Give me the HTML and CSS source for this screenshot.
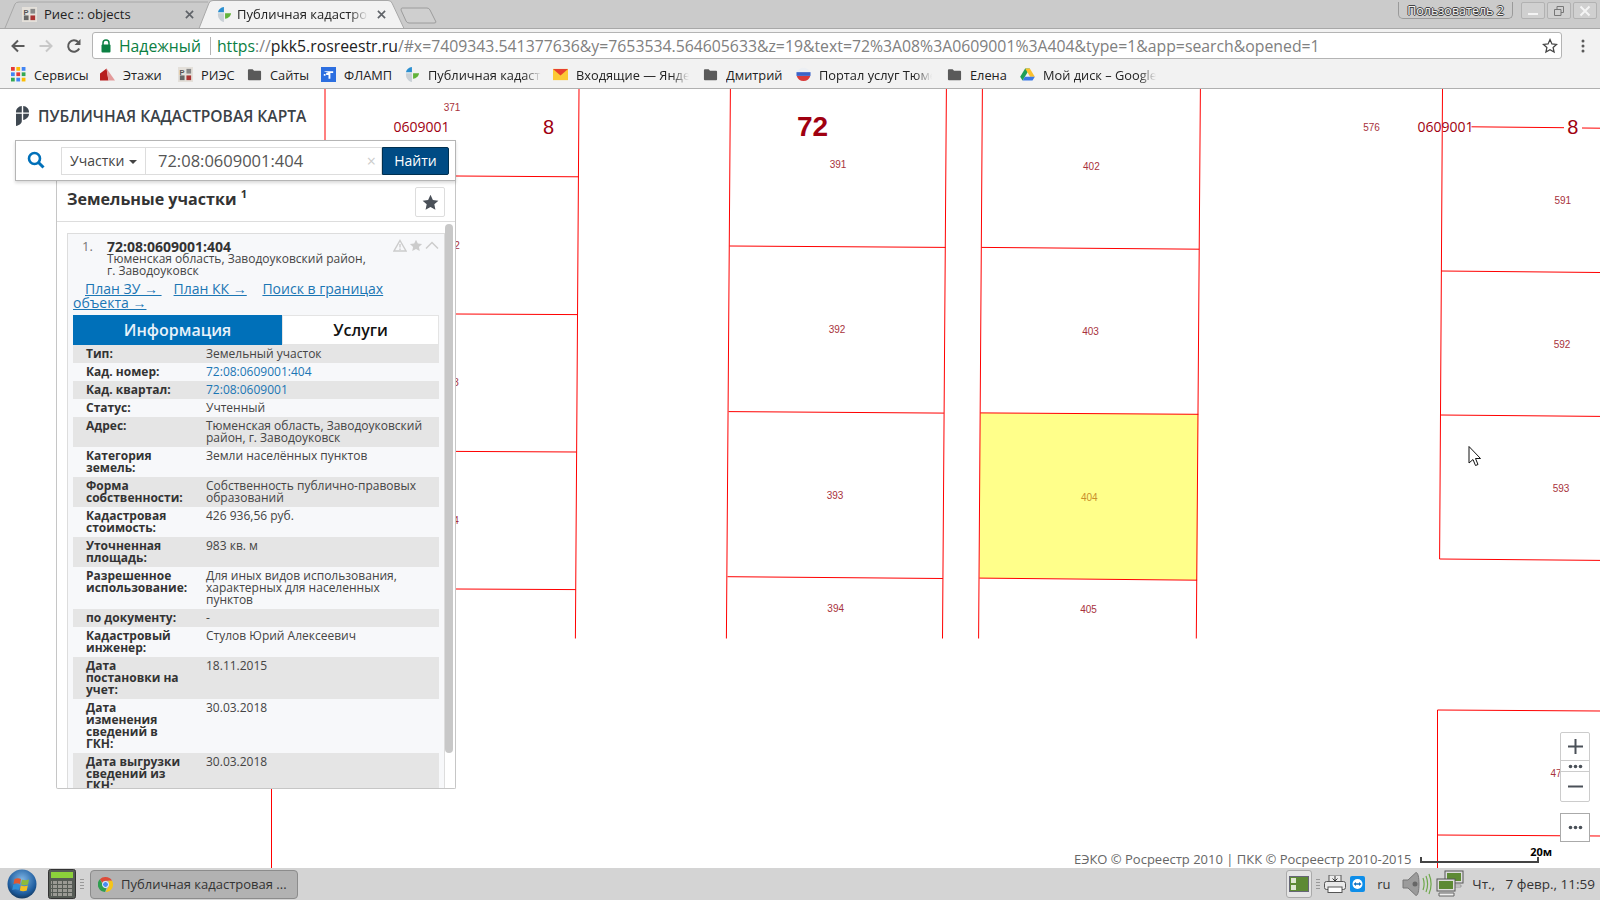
FILE: index.html
```html
<!DOCTYPE html>
<html lang="ru">
<head>
<meta charset="utf-8">
<title>Публичная кадастровая карта</title>
<link rel="stylesheet" href="styles.css">
</head>
<body>
<svg class="defs" width="0" height="0" aria-hidden="true">
  <defs>
    <symbol id="i-pkk" viewBox="0 0 14 16">
      <path d="M6.400 0C3 .3.5 2.600 0 5.600h6.400z" fill="#2b8fd0"/>
      <path d="M7.600 6.600H14c-.3 3-3 5.500-6.400 5.900z" fill="#62b33a"/>
      <path d="M0 6.600h6.400V16C3 15.500 0 12 0 8.500z" fill="#c9d0d6"/>
    </symbol>
    <symbol id="i-ries" viewBox="0 0 16 16">
      <rect width="16" height="16" fill="#e4e0da"/>
      <text x="1.500" y="8" class="ries-p">P</text>
      <rect x="9" y="2" width="5" height="5" fill="#888"/>
      <rect x="2" y="9" width="5" height="5" fill="#666"/>
      <rect x="9" y="9" width="5" height="5" fill="#a33"/>
    </symbol>
    <symbol id="i-folder" viewBox="0 0 16 16">
      <path d="M1 3.500A1 1 0 0 1 2 2.500h4l1.500 1.500H14a1 1 0 0 1 1 1V13a1 1 0 0 1-1 1H2a1 1 0 0 1-1-1z" fill="#5a5a5a"/>
    </symbol>
    <symbol id="i-x" viewBox="0 0 10 10">
      <path d="M1 1l8 8M9 1L1 9" stroke="#5f6368" stroke-width="1.800" fill="none"/>
    </symbol>
    <symbol id="i-star" viewBox="0 0 20 20">
      <path d="M10 1l2.800 6 6.500.8-4.800 4.400 1.300 6.400L10 15.400 4.200 18.600l1.300-6.400L.7 7.800 7.200 7z"/>
    </symbol>
  </defs>
</svg>

<header class="tabstrip">
  <svg class="tab-shapes" width="1600" height="29" viewBox="0 0 1600 29" aria-hidden="true">
    <path d="M5 28L15 4Q16 2 19 2H197L208 2" fill="none" stroke="#a8a8a8"/>
    <path d="M199 28.500L209 3Q210 .5 213 .5H388Q391 .5 392 3L404 28.500z" fill="#f2f2f2" stroke="#a8a8a8"/>
    <path d="M402 8H427Q429 8 430 10L436 22Q436 23 434 23H409Q407 23 406 21L401 10Q401 8 402 8z" fill="#cfcfcf" stroke="#9c9c9c"/>
  </svg>
  <div class="tab">
    <svg class="fav"><use href="#i-ries"/></svg>
    <span class="tab-title">Риес :: objects</span>
    <svg class="tab-x"><use href="#i-x"/></svg>
  </div>
  <div class="tab tab-active">
    <svg class="fav"><use href="#i-pkk"/></svg>
    <span class="tab-title tab-fade">Публичная кадастровая карта</span>
    <svg class="tab-x"><use href="#i-x"/></svg>
  </div>
  <div class="win">
    <span class="profile">Пользователь 2</span>
    <span class="winbtn"><svg width="12" height="12" viewBox="0 0 12 12"><path d="M1 9h10" stroke="#f4f4f4" stroke-width="2"/></svg></span>
    <span class="winbtn"><svg width="12" height="12" viewBox="0 0 12 12"><path d="M1.500 4.500h6.500v6h-6.500zM4 4.500v-3h6.500v6H8" fill="none" stroke="#777"/></svg></span>
    <span class="winbtn"><svg width="12" height="12" viewBox="0 0 12 12"><path d="M1.500 1.500l9 9M10.500 1.500l-9 9" stroke="#f4f4f4" stroke-width="2"/></svg></span>
  </div>
</header>

<nav class="toolbar">
  <svg class="tool" viewBox="0 0 16 16"><path d="M14.500 8H2.500M8 2.500L2.500 8 8 13.500" fill="none" stroke="#5a5a5a" stroke-width="2"/></svg>
  <svg class="tool" viewBox="0 0 16 16"><path d="M1.500 8h12M8 2.500L13.500 8 8 13.500" fill="none" stroke="#c8c8c8" stroke-width="2"/></svg>
  <svg class="tool" viewBox="0 0 16 16"><path d="M13.200 10.500A5.800 5.800 0 1 1 12.200 4" fill="none" stroke="#5a5a5a" stroke-width="2"/><path d="M14.500 1v6h-6z" fill="#5a5a5a"/></svg>
  <div class="omnibox">
    <svg class="lock" viewBox="0 0 12 14"><path d="M3 6V4a3 3 0 0 1 6 0v2" fill="none" stroke="#0b8043" stroke-width="1.500"/><rect x="1.500" y="5.500" width="9" height="8" rx="1" fill="#0b8043"/></svg>
    <span class="secure">Надежный</span>
    <span class="omni-sep"></span>
    <span class="url"><span class="url-s">https</span>://<span class="url-h">pkk5.rosreestr.ru</span>/#x=7409343.541377636&amp;y=7653534.564605633&amp;z=19&amp;text=72%3A08%3A0609001%3A404&amp;type=1&amp;app=search&amp;opened=1</span>
    <svg class="omni-star" viewBox="0 0 20 20"><path d="M10 2l2.400 5.400 5.800.6-4.300 3.900 1.200 5.700L10 14.700l-5.100 2.900 1.200-5.700L1.800 8l5.800-.6z" fill="none" stroke="#444" stroke-width="1.600"/></svg>
  </div>
  <svg class="dots" viewBox="0 0 4 16"><circle cx="2" cy="3" r="1.500"/><circle cx="2" cy="8" r="1.500"/><circle cx="2" cy="13" r="1.500"/></svg>
</nav>

<nav class="bookmarks">
  <a class="bm"><svg class="fav" viewBox="0 0 14 14"><g><rect x="0" y="0" width="3.500" height="3.500" fill="#e53935"/><rect x="5" y="0" width="3.500" height="3.500" fill="#fbbc05"/><rect x="10" y="0" width="3.500" height="3.500" fill="#4285f4"/><rect x="0" y="5" width="3.500" height="3.500" fill="#4285f4"/><rect x="5" y="5" width="3.500" height="3.500" fill="#e53935"/><rect x="10" y="5" width="3.500" height="3.500" fill="#34a853"/><rect x="0" y="10" width="3.500" height="3.500" fill="#34a853"/><rect x="5" y="10" width="3.500" height="3.500" fill="#4285f4"/><rect x="10" y="10" width="3.500" height="3.500" fill="#fbbc05"/></g></svg><span>Сервисы</span></a>
  <a class="bm"><svg class="fav" viewBox="0 0 16 16"><path d="M0 14.500V7L7 1.500 9 14.500z" fill="#b71c1c"/><path d="M7 1.500L16 14.500H9z" fill="#e39a9a"/></svg><span>Этажи</span></a>
  <a class="bm"><svg class="fav"><use href="#i-ries"/></svg><span>РИЭС</span></a>
  <a class="bm"><svg class="fav"><use href="#i-folder"/></svg><span>Сайты</span></a>
  <a class="bm"><svg class="fav" viewBox="0 0 16 16"><rect width="16" height="16" fill="#2d6fe0"/><path d="M3 4.500h10v2H10v6H8V8.500H5.500v-2H8zM3 7.500h1.800v1.800H3z" fill="#fff"/></svg><span>ФЛАМП</span></a>
  <a class="bm"><svg class="fav"><use href="#i-pkk"/></svg><span class="bm-fade">Публичная кадастровая карта</span></a>
  <a class="bm"><svg class="fav" viewBox="0 0 16 16"><rect y="2" width="16" height="12" fill="#fcc935"/><path d="M0 2h16L8 9z" fill="#e8402f"/></svg><span class="bm-fade">Входящие — Яндекс.Почта</span></a>
  <a class="bm"><svg class="fav"><use href="#i-folder"/></svg><span>Дмитрий</span></a>
  <a class="bm"><svg class="fav" viewBox="0 0 16 16"><path d="M1 5.500A7.500 7.500 0 0 1 15 5.500z" fill="#eceff3"/><path d="M.5 5.500h15v4H.5z" fill="#3a63c8"/><path d="M.8 9.500h14.400A7.500 7.500 0 0 1 .8 9.500z" fill="#d83a3a"/></svg><span class="bm-fade">Портал услуг Тюменской</span></a>
  <a class="bm"><svg class="fav"><use href="#i-folder"/></svg><span>Елена</span></a>
  <a class="bm"><svg class="fav" viewBox="0 0 16 16"><path d="M5.500 1.500h5L5.200 10.500l-2.500 4L.2 10.500z" fill="#1e9e57"/><path d="M5.500 1.500h5l5.300 9h-5z" fill="#fbc02d"/><path d="M5.200 10.500h10.600l-2.500 4H2.700z" fill="#3b78e7"/></svg><span class="bm-fade">Мой диск – Google Диск</span></a>
</nav>

<main class="map">
  <svg class="tiles" width="1600" height="779" viewBox="0 89 1600 779">
    <polygon class="sel" points="980.300,412.900 1198.300,414.300 1197.100,580 979.400,577.900"/>
    <g class="lines">
      <line x1="325" y1="89" x2="325" y2="142"/>
      <line x1="456" y1="176" x2="578.600" y2="176.800"/>
      <line x1="456" y1="314" x2="577.400" y2="314.600"/>
      <line x1="456" y1="451.400" x2="576.400" y2="452"/>
      <line x1="456" y1="589" x2="575.800" y2="589.600"/>
      <line x1="579" y1="89" x2="575.400" y2="638.500"/>
      <line x1="730.400" y1="89" x2="726.400" y2="638.500"/>
      <line x1="946.400" y1="89" x2="942.500" y2="638.500"/>
      <line x1="729.600" y1="246" x2="945.400" y2="247.400"/>
      <line x1="728.600" y1="411.600" x2="943.900" y2="413.100"/>
      <line x1="727.500" y1="576.700" x2="942.900" y2="578.500"/>
      <line x1="982.400" y1="89" x2="978.600" y2="638.500"/>
      <line x1="1200.400" y1="89" x2="1196.300" y2="638.500"/>
      <line x1="981.500" y1="247.400" x2="1199.200" y2="249.200"/>
      <line x1="980.300" y1="412.900" x2="1198.300" y2="414.300"/>
      <line x1="979.400" y1="578.100" x2="1197.100" y2="580.200"/>
      <line x1="1442.500" y1="89" x2="1439.600" y2="559"/>
      <line x1="1441.300" y1="271" x2="1600" y2="272.500"/>
      <line x1="1440.500" y1="415" x2="1600" y2="416.400"/>
      <line x1="1439.600" y1="559" x2="1600" y2="560.400"/>
      <line x1="1471.500" y1="126.800" x2="1564" y2="127.700"/>
      <line x1="1582" y1="128" x2="1600" y2="128.200"/>
      <line x1="271.500" y1="788" x2="271.500" y2="868"/>
      <line x1="1437.500" y1="710" x2="1437.500" y2="868"/>
      <line x1="1437.500" y1="710" x2="1600" y2="711"/>
      <line x1="1437.500" y1="835" x2="1600" y2="836"/>
    </g>
    <g class="lbl">
      <text x="452" y="111">371</text><text x="457" y="249">2</text><text x="456" y="386">3</text><text x="456" y="524">4</text>
      <text x="838" y="168">391</text><text x="837" y="333">392</text><text x="835" y="499">393</text><text x="835.700" y="612">394</text>
      <text x="1091.400" y="170">402</text><text x="1090.500" y="335">403</text><text class="lbl-sel" x="1089.300" y="501">404</text><text x="1088.500" y="613">405</text>
      <text x="1371.600" y="131">576</text><text x="1562.800" y="204">591</text><text x="1562" y="348">592</text><text x="1561" y="492">593</text>
      <text x="1556" y="777">47</text>
    </g>
    <g class="lbl-q"><text x="421.500" y="132">0609001</text><text x="1445.600" y="132">0609001</text></g>
    <g class="lbl-8"><text x="548.600" y="134">8</text><text x="1572.700" y="134">8</text></g>
    <text class="lbl-72" x="812.500" y="135.500">72</text>
    <path class="cursor" d="M1469 446.500v16.500l4-3.500 2.500 6 2.500-1-2.500-6h5z"/>
  </svg>

  <section class="side">
    <div class="brand">
      <svg class="brand-logo" viewBox="0 0 13 20"><path d="M5.800 0C2.500.300 0 2.800 0 6v.5h5.800zM7.200 0v6.500H13V6c0-3.200-2.400-5.700-5.800-6zM0 7.800V20c3.200-.5 5.800-2.500 5.800-5V7.800zM7.200 7.800V14C10.500 13.500 13 11 13 7.800z"/></svg>
      <span>ПУБЛИЧНАЯ КАДАСТРОВАЯ КАРТА</span>
    </div>
    <div class="search">
      <svg class="search-ico" viewBox="0 0 18 18"><circle cx="7.500" cy="7.500" r="5.500" fill="none" stroke="#0070b9" stroke-width="2.600"/><path d="M11.500 11.500l5 5" stroke="#0070b9" stroke-width="3"/></svg>
      <div class="sel-box">Участки<i class="caret"></i></div>
      <div class="input"><span>72:08:0609001:404</span><span class="clear">×</span></div>
      <button class="find">Найти</button>
    </div>
    <div class="results">
      <div class="res-head">
        <h2>Земельные участки <sup>1</sup></h2>
        <span class="fav-btn"><svg viewBox="0 0 20 20"><use href="#i-star"/></svg></span>
      </div>
      <div class="res-body">
        <span class="scroll"></span>
        <article class="card">
          <div class="card-head">
            <span class="num">1.</span>
            <div class="card-title">
              <b>72:08:0609001:404</b>
              <p>Тюменская область, Заводоуковский район,<br>г. Заводоуковск</p>
            </div>
            <div class="card-icons">
              <svg viewBox="0 0 14 13"><path d="M7 1.500L13 12H1z" fill="none" stroke="#ccc" stroke-width="1.400"/><path d="M7 5v3.500M7 9.500v1.400" stroke="#ccc" stroke-width="1.400"/></svg>
              <svg viewBox="0 0 20 20" class="star-g"><use href="#i-star"/></svg>
              <svg viewBox="0 0 14 13"><path d="M1 9.500L7 3.500l6 6" fill="none" stroke="#ccc" stroke-width="1.500"/></svg>
            </div>
          </div>
          <p class="links"><a>План ЗУ →&nbsp;</a><a>План КК →</a> <a>Поиск в границах объекта →</a></p>
          <div class="tabs"><span class="t-on">Информация</span><span class="t-off">Услуги</span></div>
          <dl class="props">
            <div><dt>Тип:</dt><dd>Земельный участок</dd></div>
            <div><dt>Кад. номер:</dt><dd><a>72:08:0609001:404</a></dd></div>
            <div><dt>Кад. квартал:</dt><dd><a>72:08:0609001</a></dd></div>
            <div><dt>Статус:</dt><dd>Учтенный</dd></div>
            <div><dt>Адрес:</dt><dd>Тюменская область, Заводоуковский район, г. Заводоуковск</dd></div>
            <div><dt>Категория земель:</dt><dd>Земли населённых пунктов</dd></div>
            <div><dt>Форма собственности:</dt><dd>Собственность публично-правовых образований</dd></div>
            <div><dt>Кадастровая стоимость:</dt><dd>426 936,56 руб.</dd></div>
            <div><dt>Уточненная площадь:</dt><dd>983 кв. м</dd></div>
            <div><dt>Разрешенное использование:</dt><dd>Для иных видов использования, характерных для населенных пунктов</dd></div>
            <div><dt>по документу:</dt><dd>-</dd></div>
            <div><dt>Кадастровый инженер:</dt><dd>Стулов Юрий Алексеевич</dd></div>
            <div><dt>Дата постановки на учет:</dt><dd>18.11.2015</dd></div>
            <div><dt>Дата изменения сведений в ГКН:</dt><dd>30.03.2018</dd></div>
            <div><dt>Дата выгрузки сведений из ГКН:</dt><dd>30.03.2018</dd></div>
          </dl>
        </article>
      </div>
    </div>
  </section>

  <div class="zoom-box">
    <span class="z z-plus"><svg width="15" height="15" viewBox="0 0 15 15"><path d="M7.500 0v15M0 7.500h15" stroke="#4a5058" stroke-width="2"/></svg></span>
    <span class="z z-dots"><svg width="15" height="5" viewBox="0 0 15 5"><circle cx="2.500" cy="2.500" r="1.800"/><circle cx="7.500" cy="2.500" r="1.800"/><circle cx="12.500" cy="2.500" r="1.800"/></svg></span>
    <span class="z z-minus"><svg width="15" height="3" viewBox="0 0 15 3"><path d="M0 1.500h15" stroke="#4a5058" stroke-width="2"/></svg></span>
  </div>
  <div class="more-box"><svg width="15" height="5" viewBox="0 0 15 5"><circle cx="2.500" cy="2.500" r="1.800"/><circle cx="7.500" cy="2.500" r="1.800"/><circle cx="12.500" cy="2.500" r="1.800"/></svg></div>
  <div class="copy">ЕЭКО © Росреестр 2010 | ПКК © Росреестр 2010-2015</div>
  <div class="scale"><b>20м</b></div>
</main>

<footer class="taskbar">
  <svg class="orb" viewBox="0 0 30 30">
    <defs><radialGradient id="g-orb" cx=".5" cy=".35" r=".7"><stop offset="0" stop-color="#7fb6e6"/><stop offset=".7" stop-color="#1d5c9e"/><stop offset="1" stop-color="#12304f"/></radialGradient></defs>
    <circle cx="15" cy="15" r="14.500" fill="url(#g-orb)"/>
    <path d="M7.500 10c2.500-1 4.500-1 6.500 0l-1 5c-2-1-4-1-6.500 0z" fill="#e2572f"/>
    <path d="M15 10.500c2 1 4.500 1 7 0l-1 5c-2.500 1-5 1-7 0z" fill="#8dbb3c"/>
    <path d="M6.200 16c2.500-1 4.500-1 6.500 0l-1 5c-2-1-4-1-6.500 0z" fill="#2f8fd8"/>
    <path d="M13.800 16.500c2 1 4.500 1 7 0l-1 5c-2.500 1-5 1-7 0z" fill="#f5c022"/>
  </svg>
  <svg class="calc" viewBox="0 0 28 30">
    <defs><pattern id="p-keys" width="5" height="4" patternUnits="userSpaceOnUse"><rect width="4" height="3" fill="#9a9a94"/></pattern></defs>
    <rect x=".5" y=".5" width="27" height="29" rx="2" fill="#555b55" stroke="#333"/>
    <rect x="3" y="3" width="22" height="6" fill="#8cd13a"/>
    <rect x="3" y="11" width="22" height="16" fill="url(#p-keys)"/>
  </svg>
  <span class="grip grip-start"></span>
  <div class="task-btn">
    <svg class="chrome" viewBox="0 0 16 16">
      <path d="M8 0a8 8 0 0 1 7 4H8a4 4 0 0 0-3.500 2L2 2.500A8 8 0 0 1 8 0z" fill="#dd4b39"/>
      <path d="M15 4a8 8 0 0 1-6.800 12l3.200-5.800A4 4 0 0 0 11.500 6L11 4z" fill="#f5c518"/>
      <path d="M2 2.500L5 7.800a4 4 0 0 0 4 4.100L7.500 16A8 8 0 0 1 2 2.500z" fill="#2f9e4f"/>
      <circle cx="8" cy="8" r="3.200" fill="#4a8cf0" stroke="#fff"/>
    </svg>
    <span>Публичная кадастровая ...</span>
  </div>
  <div class="tray">
    <span class="tray-on"><svg width="20" height="16" viewBox="0 0 20 16"><rect x=".5" y=".5" width="19" height="15" fill="#5d8a34" stroke="#667"/><rect x="2" y="2" width="5" height="5" fill="#dfe8d0"/><rect x="2" y="9" width="5" height="5" fill="#dfe8d0"/></svg></span>
    <span class="grip"></span>
    <svg class="printer" viewBox="0 0 22 18"><rect x="5" y="0" width="12" height="7" fill="#eee" stroke="#555"/><path d="M11 1v4M8.500 3.500L11 6l2.500-2.500" stroke="#333" fill="none"/><rect x=".5" y="6.500" width="21" height="8" rx="2" fill="#e9e9e9" stroke="#555"/><rect x="4" y="12" width="14" height="5.500" fill="#fff" stroke="#555"/></svg>
    <svg class="tv" viewBox="0 0 15 16"><rect width="15" height="16" rx="2" fill="#0e8ee9"/><circle cx="7.500" cy="8" r="5" fill="#fff"/><path d="M3.500 8l2.500-2v1.300h3V6l2.500 2L9 10V8.700H6V10z" fill="#0e6fc0"/></svg>
    <span class="lang">ru</span>
    <svg class="speaker" viewBox="0 0 32 24"><path d="M2 8h5l8-7.500c2 0 3 5 3 11.500s-1 11.500-3 11.500L7 16H2z" fill="#9b9b9b" stroke="#777"/><circle cx="14" cy="12" r="2.500" fill="#666"/><path d="M22 6c1.500 4 1.500 8 0 12M25 4c2 5 2 11 0 16M28 2c2.500 6 2.500 14 0 20" fill="none" stroke="#6fa84b" stroke-width="1.200"/></svg>
    <svg class="net" viewBox="0 0 28 28"><rect x="9" y="1" width="18" height="12" fill="#ddd" stroke="#555"/><rect x="11" y="3" width="14" height="8" fill="#5d8a34"/><path d="M13 15h12v2H13z" fill="#ddd" stroke="#666" stroke-width=".5"/><rect x="1" y="9" width="18" height="12" fill="#ddd" stroke="#555"/><rect x="3" y="11" width="14" height="8" fill="#5d8a34"/><path d="M3 23h15v3H3z" fill="#eee" stroke="#666"/></svg>
    <span class="clock">Чт.,   7 февр., 11:59</span>
  </div>
</footer>
</body>
</html>
```
FILE: styles.css
```css
* { box-sizing: border-box; }
html, body { margin: 0; padding: 0; }
body {
  width: 1600px;
  height: 900px;
  overflow: hidden;
  display: flex;
  flex-direction: column;
  background: #fff;
  font-family: "Open Sans", "Noto Sans", sans-serif;
  color: #333;
}
.defs { position: absolute; }

/* browser chrome */
.tabstrip {
  position: relative;
  flex: 0 0 29px;
  display: flex;
  padding-left: 22px;
  background: #cbcbcb;
  border-bottom: 1px solid #a8a8a8;
}
.tab-shapes { position: absolute; left: 0; top: 0; }
.tab {
  position: relative;
  width: 195px;
  height: 28px;
  display: flex;
  align-items: center;
  font-size: 13px;
  color: #222;
}
.tab-active { width: 172px; }
.fav { width: 15px; height: 15px; flex: none; }
.tab-title { margin-left: 7px; flex: 1; white-space: nowrap; overflow: hidden; }
.tab-active .tab-title { margin-left: 5px; }
.tab-fade { mask-image: linear-gradient(90deg, #000 86%, transparent 100%); }
.tab-x { width: 9px; height: 9px; flex: none; margin-right: 23px; }
.tab-active .tab-x { margin-right: 3px; margin-left: 9px; }
.win {
  position: absolute;
  right: 3px;
  top: 2px;
  display: flex;
  gap: 2px;
  align-items: flex-start;
}
.profile {
  width: 115px;
  height: 17px;
  margin-right: 6px;
  text-align: center;
  font-size: 12.500px;
  line-height: 18px;
  color: #f2f2f2;
  border: 1px solid #9a9a9a;
  border-top: 0;
  border-radius: 0 0 5px 5px;
  text-shadow: 1px 0 #444, -1px 0 #444, 0 1px #444, 0 -1px #444;
}
.winbtn {
  width: 24px;
  height: 17px;
  display: flex;
  align-items: center;
  justify-content: center;
  background: #d0d0d0;
  border: 1px solid #b2b2b2;
  border-radius: 2px;
}

.toolbar {
  flex: 0 0 31px;
  position: relative;
  display: flex;
  align-items: center;
  padding: 2px 0 0 10px;
  background: #f2f2f2;
}
.tool { width: 16px; height: 16px; flex: none; margin-right: 12px; }
.omnibox {
  margin-left: -2px;
  width: 1470px;
  height: 27px;
  display: flex;
  align-items: center;
  padding-left: 7px;
  background: #fff;
  border: 1px solid #b4b4b4;
  border-radius: 3px;
  font-size: 15.750px;
  white-space: nowrap;
  color: #808080;
}
.lock { width: 12px; height: 14px; flex: none; }
.secure { margin-left: 7px; color: #0b8043; }
.omni-sep { width: 1px; height: 18px; margin: 0 6px 0 9px; background: #b4b4b4; }
.url { flex: 1; font-size: 15.800px; }
.url-s { color: #0b8043; }
.url-h { color: #222; }
.omni-star { width: 16px; height: 16px; flex: none; margin-right: 3px; }
.dots { width: 4px; height: 16px; flex: none; margin-left: 19px; fill: #5a5a5a; }

.bookmarks {
  flex: 0 0 29px;
  display: grid;
  grid-template-columns: 89px 78px 69px 74px 84px 148px 150px 93px 151px 73px 140px;
  align-items: center;
  padding: 1px 0 0 11px;
  background: #f2f2f2;
  border-bottom: 1px solid #b0b0b0;
  font-size: 12.800px;
  color: #222;
}
.bm { display: flex; align-items: center; gap: 8px; min-width: 0; }
.bm span { white-space: nowrap; overflow: hidden; }
.bm-fade { width: 113px; mask-image: linear-gradient(90deg, #000 85%, transparent 100%); }

/* map canvas */
.map {
  position: relative;
  flex: 1 1 auto;
  min-height: 0;
  overflow: hidden;
  background: #fff;
}
.tiles { position: absolute; left: 0; top: 0; }
.sel { fill: #ffff8a; }
.lines line { stroke: #f00; stroke-width: 1; }
.lbl text { font: 10px "Liberation Sans", sans-serif; fill: #a8323c; text-anchor: middle; }
.lbl .lbl-sel { fill: #c9902a; }
.lbl-q text { font: 14px "Open Sans", sans-serif; fill: #a00010; text-anchor: middle; }
.lbl-8 text { font: 20px "Liberation Sans", sans-serif; fill: #a00010; text-anchor: middle; }
.lbl-72 { font: bold 28px "Liberation Sans", sans-serif; fill: #a00010; text-anchor: middle; }
.cursor { fill: #fff; stroke: #111; stroke-width: 1; }
.ries-p { font: bold 8px "Liberation Sans", sans-serif; fill: #555; }

/* side panel */
.side { position: absolute; left: 15px; top: 16px; width: 441px; }
.brand {
  height: 35px;
  display: flex;
  align-items: flex-start;
  padding-left: 1px;
  gap: 9px;
  font-size: 15.600px;
  font-weight: 600;
  line-height: 22px;
  color: #3b4248;
  white-space: nowrap;
}
.brand-logo { width: 13px; height: 20px; flex: none; fill: #3f4851; margin-top: 1px; }
.search {
  height: 41px;
  display: flex;
  align-items: center;
  padding-left: 45px;
  padding-right: 6px;
  position: relative;
  background: #fff;
  border: 1px solid #b5b5b5;
  box-shadow: 0 2px 3px rgba(0, 0, 0, .15);
  font-size: 14px;
}
.search-ico { position: absolute; left: 11px; top: 10px; width: 18px; height: 18px; }
.sel-box {
  width: 84px;
  height: 28px;
  display: flex;
  align-items: center;
  padding-left: 8px;
  border: 1px solid #ddd;
  border-right: 0;
  color: #444;
}
.caret {
  margin: 2px 0 0 5px;
  border-top: 4px solid #444;
  border-left: 4px solid transparent;
  border-right: 4px solid transparent;
}
.input {
  flex: 1;
  height: 28px;
  display: flex;
  align-items: center;
  justify-content: space-between;
  padding: 0 5px 0 12px;
  border: 1px solid #ddd;
  font-size: 16.500px;
  color: #555;
}
.clear { color: #ccc; font-size: 16px; }
.find {
  width: 67px;
  height: 28px;
  margin: 0;
  padding: 0;
  background: #004b84;
  border: 1px solid #003050;
  border-radius: 0 2px 2px 0;
  font: 14px "Open Sans", sans-serif;
  color: #fff;
}
.results {
  margin-left: 41px;
  width: 400px;
  height: 608px;
  display: flex;
  flex-direction: column;
  background: #fff;
  border: 1px solid #c6c6c6;
  border-top: 0;
  border-radius: 0 0 2px 2px;
  overflow: hidden;
}
.res-head {
  flex: 0 0 41px;
  display: flex;
  align-items: flex-start;
  justify-content: space-between;
  padding: 5px 10px 0 10px;
  border-bottom: 1px solid #ddd;
}
.res-head h2 { margin: 0; font-size: 16.100px; font-weight: 700; line-height: 26px; color: #333; }
.res-head sup { font-size: 11px; line-height: 0; vertical-align: 7px; }
.fav-btn {
  width: 30px;
  height: 30px;
  margin-top: 1px;
  display: flex;
  align-items: center;
  justify-content: center;
  border: 1px solid #ddd;
  border-radius: 2px;
}
.fav-btn svg { width: 17px; height: 17px; fill: #4a5058; }
.res-body { position: relative; flex: 1; min-height: 0; overflow: hidden; padding: 11px 0 0 10px; }
.scroll {
  position: absolute;
  left: 388px;
  top: 2px;
  width: 8px;
  height: 529px;
  background: #c8c8c8;
  border-radius: 4px;
}
.card {
  width: 378px;
  padding: 0 5px;
  background: #f7f8fa;
  border: 1px solid #ddd;
}
.card-head { position: relative; display: flex; padding-top: 6px; }
.num { width: 34px; padding-left: 9px; font-size: 13px; line-height: 13px; color: #777; }
.card-title b { display: block; font-size: 14px; line-height: 13px; color: #333; }
.card-title p { margin: 0; font-size: 12px; line-height: 12px; color: #444; }
.card-icons { position: absolute; right: 0; top: 5px; display: flex; gap: 2px; }
.card-icons svg { width: 14px; height: 13px; }
.star-g { fill: #ccc; }
.links { margin: 5px 0 5px; text-indent: 12px; font-size: 14px; line-height: 14px; color: #1b76b4; }
.links a { text-decoration: underline; margin-right: 12px; }
.tabs { height: 30px; display: flex; font-size: 16px; font-weight: 600; line-height: 30px; text-align: center; }
.t-on { width: 209px; background: #0070b9; color: #e8f2fa; }
.t-off { flex: 1; background: #fff; color: #111; border: 1px solid #e4e4e4; line-height: 28px; }
.props { margin: 0; font-size: 12px; line-height: 12px; }
.props div { display: grid; grid-template-columns: 133px 1fr; padding: 3px 0; }
.props div:nth-child(odd) { background: #e5e5e5; }
.props dt { padding: 0 22px 0 13px; font-weight: 700; color: #333; }
.props dd { margin: 0; padding-right: 15px; color: #444; }
.props a { color: #1b76b4; }

/* map controls */
.zoom-box {
  position: absolute;
  left: 1560px;
  top: 643px;
  width: 30px;
  height: 70px;
  display: flex;
  flex-direction: column;
  background: #fff;
  border: 1px solid #ccc;
  border-radius: 2px;
}
.zoom-box svg, .more-box svg { fill: #4a5058; }
.z { display: flex; align-items: center; justify-content: center; }
.z-plus { height: 28px; border-bottom: 1px solid #ccc; }
.z-dots { height: 11px; border-bottom: 1px solid #ccc; }
.z-minus { flex: 1; }
.more-box {
  position: absolute;
  left: 1560px;
  top: 724px;
  width: 30px;
  height: 29px;
  display: flex;
  align-items: center;
  justify-content: center;
  background: #fff;
  border: 1px solid #aaa;
}
.copy {
  position: absolute;
  left: 1074px;
  top: 761px;
  font-size: 13px;
  line-height: 18px;
  color: #666;
  white-space: nowrap;
}
.scale {
  position: absolute;
  left: 1420px;
  top: 768px;
  width: 119px;
  height: 6px;
  border: 2px solid #444;
  border-top: 0;
}
.scale b {
  position: absolute;
  right: -15px;
  top: -11px;
  font-size: 11px;
  line-height: 12px;
  color: #000;
  text-shadow: 0 0 2px #fff;
}

/* desktop panel */
.taskbar {
  flex: 0 0 32px;
  display: flex;
  align-items: center;
  padding-left: 7px;
  background: #d4d4d4;
  font-size: 13px;
  color: #333;
}
.orb { width: 30px; height: 30px; flex: none; }
.calc { width: 28px; height: 30px; flex: none; margin-left: 11px; }
.grip {
  width: 4px;
  height: 10px;
  flex: none;
  margin: 0 4px;
  background: repeating-linear-gradient(#999 0 1px, transparent 1px 3px);
}
.grip-start { margin-right: 6px; }
.task-btn {
  width: 208px;
  height: 29px;
  display: flex;
  align-items: center;
  gap: 8px;
  padding-left: 7px;
  background: #b2b2b2;
  border: 1px solid #8c8c8c;
  border-radius: 4px;
  white-space: nowrap;
}
.chrome { width: 15px; height: 15px; flex: none; }
.tray { margin-left: auto; display: flex; align-items: center; padding-right: 5px; }
.tray-on {
  width: 26px;
  height: 28px;
  display: flex;
  align-items: center;
  justify-content: center;
  border: 1px solid #aaa;
  border-radius: 3px;
  background: #e4e4e4;
}
.printer { width: 22px; height: 18px; flex: none; }
.tv { width: 15px; height: 16px; flex: none; margin-left: 4px; }
.lang { margin-left: 12px; width: 24px; }
.speaker { width: 32px; height: 24px; flex: none; }
.net { width: 28px; height: 28px; flex: none; margin-left: 3px; }
.clock { margin-left: 8px; white-space: pre; font-size: 13.500px; }
```
